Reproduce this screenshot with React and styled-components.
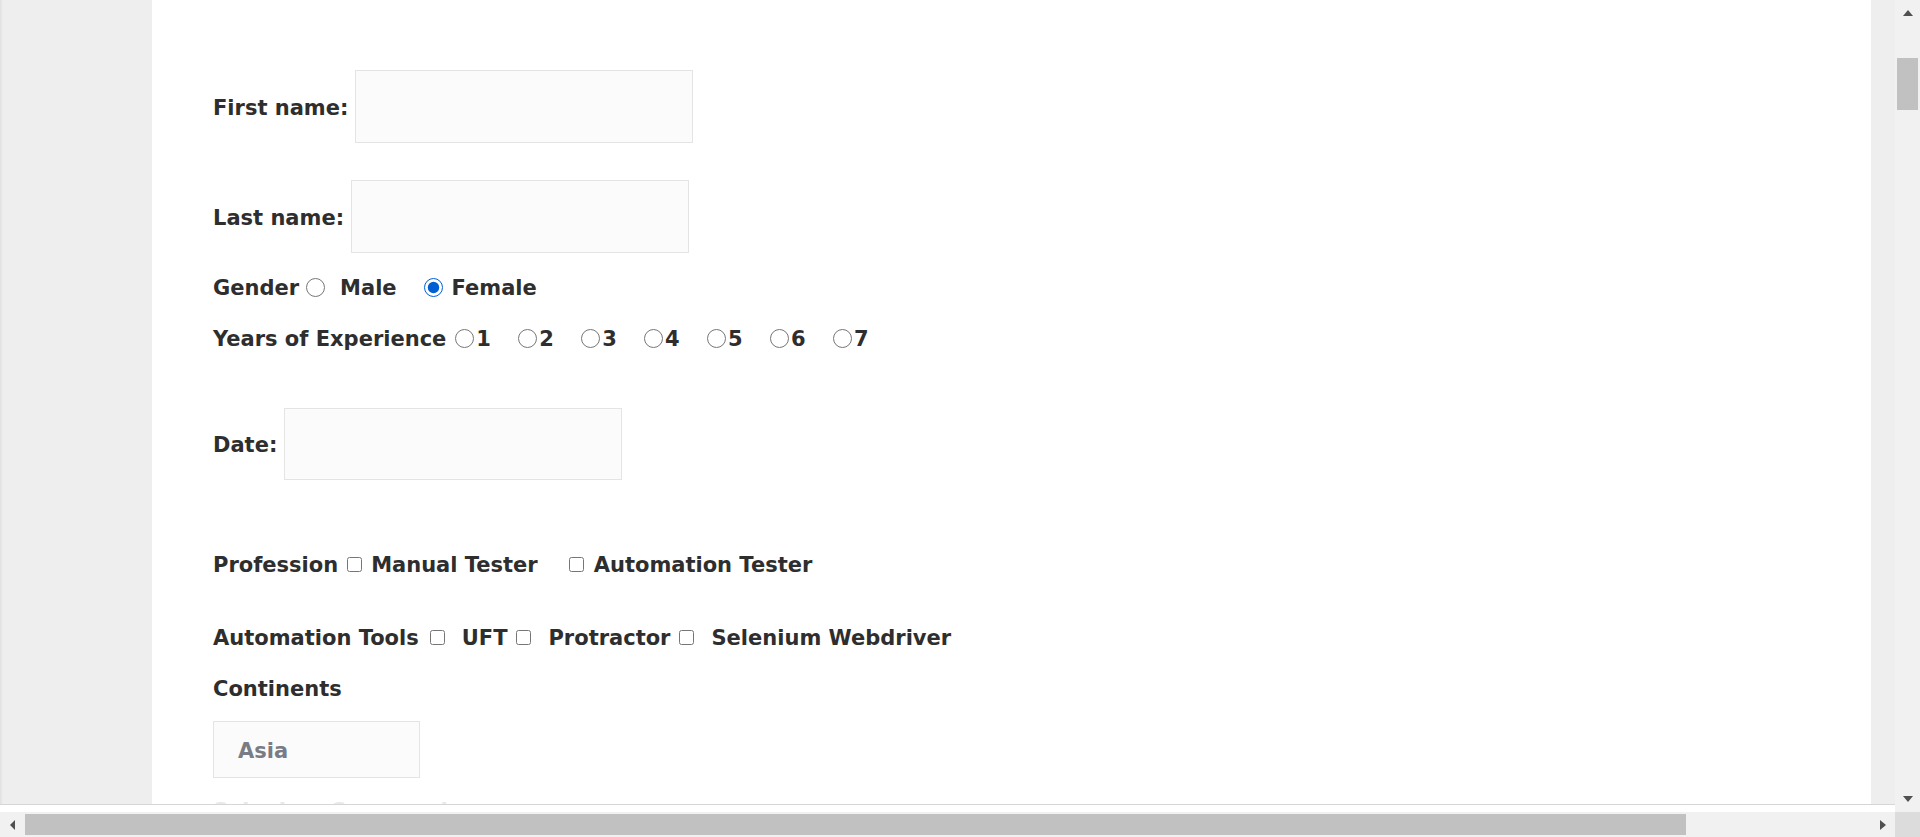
import React from "react";
import styled, { createGlobalStyle } from "styled-components";

const GlobalStyle = createGlobalStyle`
  html, body {
    margin: 0;
    padding: 0;
    overflow: hidden;
    background: #ffffff;
  }
  * {
    box-sizing: border-box;
  }
`;

const genderOptions = [
  { label: "Male", ml: 7, gap: 15, checked: false },
  { label: "Female", ml: 27, gap: 9, checked: true },
];

const years = ["1", "2", "3", "4", "5", "6", "7"];

const professions = [
  { label: "Manual Tester", ml: 9, gap: 9 },
  { label: "Automation Tester", ml: 31, gap: 10 },
];

const tools = [
  { label: "UFT", ml: 11, gap: 17 },
  { label: "Protractor", ml: 9, gap: 17 },
  { label: "Selenium Webdriver", ml: 9, gap: 17 },
];

function App() {
  return (
    <>
      <GlobalStyle />
      <Frame>
        <Main>
          <Page>
            <Gutter $w={152} $edge />
            <Content>
              <Row $mt={70} $h={73}>
                <Label>First name:</Label>
                <TextBox type="text" $ml={7} />
              </Row>
              <Row $mt={37} $h={73}>
                <Label>Last name:</Label>
                <TextBox type="text" $ml={7} />
              </Row>

              <Row $mt={22} $h={24}>
                <Label>Gender</Label>
                {genderOptions.map((o) => (
                  <Choice key={o.label} $ml={o.ml}>
                    <Radio type="radio" name="sex" defaultChecked={o.checked} />
                    <ChoiceText $ml={o.gap}>{o.label}</ChoiceText>
                  </Choice>
                ))}
              </Row>

              <Row $mt={27} $h={24}>
                <Label>Years of Experience</Label>
                {years.map((y, i) => (
                  <Choice key={y} $ml={i === 0 ? 9 : 27.3}>
                    <Radio type="radio" name="exp" />
                    <ChoiceText $ml={2}>{y}</ChoiceText>
                  </Choice>
                ))}
              </Row>

              <Row $mt={58} $h={72}>
                <Label>Date:</Label>
                <TextBox type="text" $ml={7} $h={72} />
              </Row>

              <Row $mt={72} $h={24}>
                <Label>Profession</Label>
                {professions.map((p) => (
                  <Choice key={p.label} $ml={p.ml}>
                    <Check type="checkbox" />
                    <ChoiceText $ml={p.gap}>{p.label}</ChoiceText>
                  </Choice>
                ))}
              </Row>

              <Row $mt={49} $h={24}>
                <Label>Automation Tools</Label>
                {tools.map((t) => (
                  <Choice key={t.label} $ml={t.ml}>
                    <Check type="checkbox" />
                    <ChoiceText $ml={t.gap}>{t.label}</ChoiceText>
                  </Choice>
                ))}
              </Row>

              <Row $mt={27} $h={24}>
                <Label>Continents</Label>
              </Row>
              <Row $mt={21} $h={57}>
                <SelectBox>Asia</SelectBox>
              </Row>
              <Row $mt={20} $h={24}>
                <Label $faint>Selenium Commands</Label>
              </Row>
            </Content>
            <Gutter $w={24} />
          </Page>
          <Divider />
          <Strip />
        </Main>

        <VScroll>
          <ArrowUp />
          <VThumb />
          <Spacer />
          <ArrowDown />
        </VScroll>

        <HScroll>
          <ArrowLeft />
          <HThumb />
          <Spacer />
          <ArrowRight />
        </HScroll>

        <Corner />
      </Frame>
    </>
  );
}

export default App;

const Frame = styled.div`
  width: 1920px;
  height: 837px;
  display: grid;
  grid-template-columns: 1895px 25px;
  grid-template-rows: 812px 25px;
  overflow: hidden;
`;

const Main = styled.div`
  display: flex;
  flex-direction: column;
  overflow: hidden;
  background: #ffffff;
`;

const Page = styled.div`
  display: flex;
  height: 804px;
  flex: none;
  overflow: hidden;
`;

const Gutter = styled.div`
  width: ${(props) => props.$w}px;
  flex: none;
  background: #eeeeee;
  box-shadow: ${(props) =>
    props.$edge ? "inset 3px 0 3px -2px rgba(0, 0, 0, 0.08)" : "none"};
`;

const Content = styled.div`
  flex: 1;
  display: flex;
  flex-direction: column;
  padding-left: 61px;
  background: #ffffff;
  color: #2e2e2e;
  font-family: "DejaVu Sans", Verdana, sans-serif;
  font-weight: bold;
  font-size: 21px;
  overflow: hidden;
`;

const Row = styled.div`
  display: flex;
  align-items: center;
  flex: none;
  height: ${(props) => props.$h}px;
  margin-top: ${(props) => props.$mt}px;
`;

const Label = styled.span`
  white-space: nowrap;
  padding-top: 2px;
  color: ${(props) => (props.$faint ? "#e9e9e9" : "#2e2e2e")};
`;

const TextBox = styled.input`
  width: 338px;
  height: ${(props) => props.$h || 73}px;
  margin: 0 0 0 ${(props) => props.$ml}px;
  padding: 0 12px;
  border: 1px solid #e4e4e4;
  border-radius: 0;
  background: #fbfbfb;
  outline: none;
  font: inherit;
  color: #333333;
`;

const Choice = styled.label`
  display: flex;
  align-items: center;
  margin-left: ${(props) => props.$ml}px;
`;

const ChoiceText = styled.span`
  margin-left: ${(props) => props.$ml}px;
  padding-top: 2px;
  white-space: nowrap;
`;

const Radio = styled.input`
  width: 19px;
  height: 19px;
  margin: 0;
  accent-color: #005fd4;
`;

const Check = styled.input`
  width: 15px;
  height: 15px;
  margin: 0;
`;

const SelectBox = styled.div`
  width: 207px;
  height: 57px;
  display: flex;
  align-items: center;
  padding: 2px 0 0 24px;
  border: 1px solid #e4e4e4;
  background: #fbfbfb;
  color: #787c86;
`;

const Divider = styled.div`
  height: 1px;
  flex: none;
  background: #d6d6d6;
`;

const Strip = styled.div`
  height: 7px;
  flex: none;
  background: #ffffff;
`;

const VScroll = styled.div`
  display: flex;
  flex-direction: column;
  align-items: center;
  background: #f1f1f1;
`;

const HScroll = styled.div`
  display: flex;
  align-items: center;
  background: #f1f1f1;
`;

const Spacer = styled.div`
  flex: 1;
`;

const ArrowUp = styled.div`
  margin-top: 10px;
  width: 0;
  height: 0;
  border-left: 5.5px solid transparent;
  border-right: 5.5px solid transparent;
  border-bottom: 6px solid #505050;
`;

const ArrowDown = styled.div`
  margin-bottom: 10px;
  width: 0;
  height: 0;
  border-left: 5.5px solid transparent;
  border-right: 5.5px solid transparent;
  border-top: 6px solid #505050;
`;

const ArrowLeft = styled.div`
  margin-left: 10px;
  width: 0;
  height: 0;
  border-top: 5px solid transparent;
  border-bottom: 5px solid transparent;
  border-right: 5px solid #505050;
`;

const ArrowRight = styled.div`
  margin-right: 9px;
  width: 0;
  height: 0;
  border-top: 5px solid transparent;
  border-bottom: 5px solid transparent;
  border-left: 6px solid #505050;
`;

const VThumb = styled.div`
  margin-top: 42px;
  width: 21px;
  height: 52px;
  background: #c1c1c1;
`;

const HThumb = styled.div`
  margin-left: 10px;
  width: 1661px;
  height: 21px;
  background: #c1c1c1;
`;

const Corner = styled.div`
  background: #dcdcdc;
`;
